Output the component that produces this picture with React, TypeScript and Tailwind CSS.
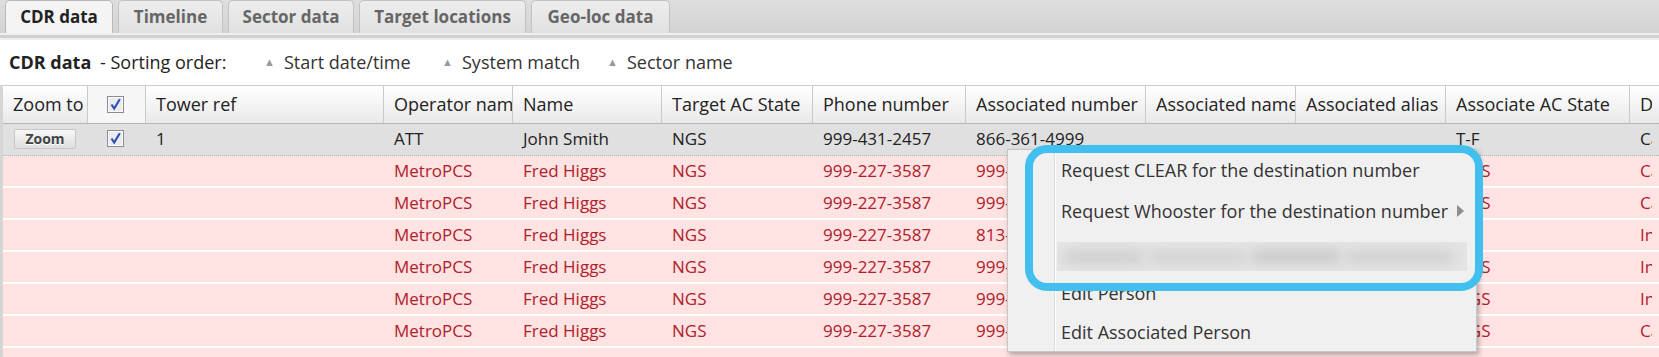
import React from "react";

const GRID =
  "grid grid-cols-[85px_58px_238px_129px_149px_151px_153px_180px_150px_150px_184px_160px]";

const tabs = [
  { label: "CDR data", w: "w-[108px]", active: true },
  { label: "Timeline", w: "w-[105px]" },
  { label: "Sector data", w: "w-[126px]" },
  { label: "Target locations", w: "w-[167px]" },
  { label: "Geo-loc data", w: "w-[139px]" },
];

const sorts = [
  { label: "Start date/time", w: "w-[178px]" },
  { label: "System match", w: "w-[165px]" },
  { label: "Sector name", w: "" },
];

const headers = [
  "Zoom to",
  "",
  "Tower ref",
  "Operator name",
  "Name",
  "Target AC State",
  "Phone number",
  "Associated number",
  "Associated name",
  "Associated alias",
  "Associate AC State",
  "Direction",
];

// pink rows: phone, associated number, associate AC state, direction
const pinkRows = [
  ["999-227-3587", "999-431-2457", "NGS", "Call"],
  ["999-227-3587", "999-431-2457", "NGS", "Call"],
  ["999-227-3587", "813-555-0142", "", "Incoming"],
  ["999-227-3587", "999-431-2457", "NGS", "Incoming"],
  ["999-227-3587", "999-431-2457", "NGS", "Incoming"],
  ["999-227-3587", "999-431-2457", "NGS", "Call"],
  ["999-227-3587", "999-406-0077", "NGS", "Call"],
];

const Checkbox = () => (
  <svg width="17" height="17" viewBox="0 0 17 17">
    <rect x="0.5" y="0.5" width="16" height="16" fill="#e9ebef" stroke="#8c8c8c" />
    <rect x="1.5" y="1.5" width="14" height="14" fill="none" stroke="#fbfbfb" />
    <path d="M4.5 8.5 L7.2 12.5 L12.8 3.2" stroke="#2c52b4" strokeWidth="2.2" fill="none" />
  </svg>
);

const cell = "flex items-center pl-[10px] overflow-hidden whitespace-nowrap";

// last column is cut by the panel edge, only the first letter shows
const Edge = ({ children }: { children: React.ReactNode }) => (
  <div className={cell}>
    <span className="block w-[12px] overflow-hidden">{children}</span>
  </div>
);

export default function App() {
  return (
    <div className="relative h-[357px] w-[1659px] overflow-hidden bg-white font-['Open_Sans',sans-serif] text-[17px] text-[#222]">
      {/* tab strip */}
      <div className="flex h-[33px] items-end gap-[5px] bg-linear-to-b from-[#dedede] to-[#d3d3d3] pl-[5px]">
        {tabs.map((t) => (
          <div
            key={t.label}
            className={`${t.w} flex h-[33px] items-center justify-center rounded-t-[5px] border border-b-0 font-bold ${
              t.active
                ? "border-[#b9b9b9] bg-[#f4f4f4] text-[#222]"
                : "border-[#c2c2c2] bg-linear-to-b from-[#ededed] to-[#e1e1e1] text-[#666]"
            }`}
          >
            {t.label}
          </div>
        ))}
      </div>
      <div className="h-[2px] bg-[#efefef]" />
      <div className="h-[3px] bg-[#d1d1d1]" />
      <div className="h-[2px] bg-[#eeeeee]" />

      {/* sorting bar */}
      <div className="flex h-[45px] items-center pl-[9px] text-[18px]">
        <span className="w-[91px] font-bold">CDR data</span>
        <span className="w-[164px]">- Sorting order:</span>
        {sorts.map((s) => (
          <span key={s.label} className={`${s.w} flex items-center`}>
            <span className="w-[20px] text-[11px] text-[#999]">▲</span>
            <span className="text-[#333]">{s.label}</span>
          </span>
        ))}
      </div>

      {/* table */}
      <div className="border-l-[3px] border-[#d5d5d5]">
        <div
          className={`${GRID} h-[39px] border-t border-b border-t-[#cccccc] border-b-[#b5b5b5] border-b-dotted bg-linear-to-b from-white to-[#e9e9e9] text-[18px]`}
        >
          {headers.map((h, i) =>
            i === 1 ? (
              <div key={i} className="flex items-center border-r border-[#cacaca] bg-[#f6f6f6] pl-[19px]">
                <Checkbox />
              </div>
            ) : i === headers.length - 1 ? (
              <Edge key={i}>{h}</Edge>
            ) : (
              <div key={i} className={`${cell} border-r border-[#cacaca]`}>
                {h}
              </div>
            )
          )}
        </div>

        {/* selected row */}
        <div className={`${GRID} h-[32px] border-b border-dotted border-[#b5b5b5] bg-[#e0e0e0] pb-[2px]`}>
          <div className="flex items-center pl-[11px]">
            <button className="h-[20px] w-[62px] rounded-[2px] border border-[#c6c6c6] bg-linear-to-b from-[#f7f7f7] to-[#dedede] text-[14px] font-bold leading-none text-[#444] [text-shadow:0_1px_0_#fff]">
              Zoom
            </button>
          </div>
          <div className="flex items-center pl-[19px]">
            <Checkbox />
          </div>
          <div className={cell}>1</div>
          <div className={cell}>ATT</div>
          <div className={cell}>John Smith</div>
          <div className={cell}>NGS</div>
          <div className={cell}>999-431-2457</div>
          <div className={cell}>866-361-4999</div>
          <div className={cell}></div>
          <div className={cell}></div>
          <div className={cell}>T-F</div>
          <Edge>Call</Edge>
        </div>

        {pinkRows.map((r, i) => (
          <div
            key={i}
            className={`${GRID} h-[32px] border-b-2 border-white bg-[#ffe2e2] pb-[1px] text-[#b0202a]`}
          >
            <div />
            <div />
            <div />
            <div className={cell}>MetroPCS</div>
            <div className={cell}>Fred Higgs</div>
            <div className={cell}>NGS</div>
            <div className={cell}>{r[0]}</div>
            <div className={cell}>{r[1]}</div>
            <div className={cell}>James Smith</div>
            <div className={cell}>James Smith</div>
            <div className={cell}>{r[2]}</div>
            <Edge>{r[3]}</Edge>
          </div>
        ))}
      </div>

      {/* context menu */}
      <div className="absolute left-[1007px] top-[149px] h-[203px] w-[470px] border border-[#c8c8c8] bg-[#f0f0f0] text-[18px] text-[#333] shadow-[2px_3px_5px_rgba(0,0,0,0.28)]">
        <div className="absolute bottom-0 left-[46px] top-0 w-[2px] border-l border-[#dadada] bg-white" />
        <div className="flex h-[40px] items-center pl-[53px]">Request CLEAR for the destination number</div>
        <div className="relative flex h-[42px] items-center pl-[53px]">
          Request Whooster for the destination number
          <svg className="absolute left-[449px] top-[15px]" width="8" height="12" viewBox="0 0 8 12">
            <path d="M0 0 L7 6 L0 12 Z" fill="#8d8d8d" />
          </svg>
        </div>
        <div className="h-[42px] pl-[49px] pt-[10px]">
          <div className="flex h-[29px] w-[410px] items-center gap-[4px] overflow-hidden bg-[#e4e4e4] px-[6px]">
            <div className="h-[12px] w-[80px] rounded-full bg-[#cdcdcd] blur-[6px]" />
            <div className="h-[12px] w-[100px] rounded-full bg-[#d2d2d2] blur-[6px]" />
            <div className="h-[13px] w-[90px] rounded-full bg-[#c9c9c9] blur-[6px]" />
            <div className="h-[12px] w-[110px] rounded-full bg-[#cfcfcf] blur-[6px]" />
          </div>
        </div>
        <div className="flex h-[39px] items-center pl-[53px]">Edit Person</div>
        <div className="flex h-[39px] items-center pl-[53px]">Edit Associated Person</div>
      </div>

      {/* highlight annotation */}
      <div className="pointer-events-none absolute left-[1025px] top-[145px] h-[146px] w-[458px] rounded-[22px] border-[8px] border-[#41bfee]" />
    </div>
  );
}
